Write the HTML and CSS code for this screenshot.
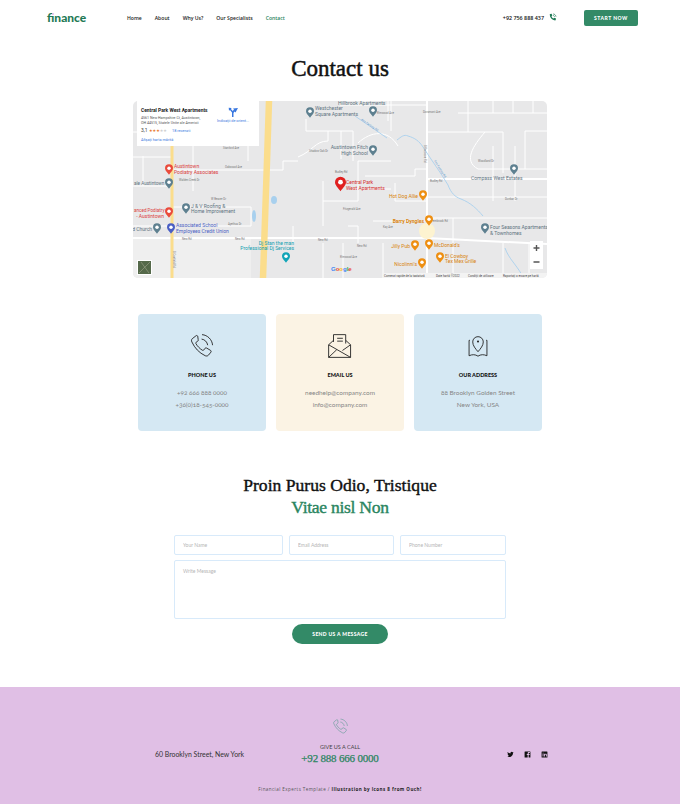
FILE: index.html
```html
<!DOCTYPE html>
<html lang="en">
<head>
    <meta charset="UTF-8">
    <meta name="viewport" content="width=device-width, initial-scale=1.0">
    <title>Contact us</title>
    <link rel="stylesheet" href="styles.css">
</head>
<body>
    <header class="site_header">
        <a class="logo" href="#home">finance</a>
        <nav class="main_nav">
            <a href="#home">Home</a>
            <a href="#about">About</a>
            <a href="#why">Why Us?</a>
            <a href="#specialists">Our Specialists</a>
            <a class="active" href="#contact">Contact</a>
        </nav>
        <div class="header_phone">
            <span>+92 756 888 437</span>
            <svg class="phone_small" viewBox="0 0 24 24">
                <path class="phone_fill" d="M6 2.5l3.6-.8 2 5-2.3 1.8c.8 2.8 2.7 5 5.3 6.3l2-2.2 4.8 2.3-.9 3.900c-.2.8-.9 1.300-1.700 1.200C10.500 18.500 4.800 12.300 4.600 4.200c0-.8.6-1.500 1.400-1.700z"/>
                <path class="phone_wave" d="M14 2.500c3.800.5 6.800 3.500 7.300 7.300M14 6.500c1.700.4 3 1.700 3.400 3.400"/>
            </svg>
        </div>
        <a class="btn_start" href="#start">START NOW</a>
    </header>

    <main>
        <h1 class="page_title">Contact us</h1>

        <section class="map_box">
            <svg class="map" viewBox="0 0 414 177">
                <defs>
                    <symbol id="pin" viewBox="0 0 12 16">
                        <path d="M6 0a6 6 0 0 1 6 6c0 3.500-3.500 6-6 10C3.500 12 0 9.500 0 6a6 6 0 0 1 6-6z"/>
                        <circle cx="6" cy="6" r="2.600" fill="#fff"/>
                    </symbol>
                </defs>
                <rect width="414" height="177" fill="#e8e8e9"/>
                <rect y="137" width="118" height="40" fill="#efefef"/>

                <!-- minor streets -->
                <g class="street">
                    <path d="M0 85H40M40 69H150M0 56H40M0 31H38M60 36V90M84 10V36H100M115 30V60M40 106H118V125H60M0 125H40"/>
                    <path d="M150 69V60H165M165 56C180 50 182 40 195 40V30M190 80V125M190 100H225V60M225 60H258M220 88H258M208 58V30M258 30V0"/>
                    <path d="M207 4H294M232 0V4M255 0V20M225 42C238 30 255 28 265 45M173 18V30H220V60"/>
                    <path d="M294 31H370V72M335 0V31M325 12H414M360 12V0M380 12V0M400 12V0M352 31C340 45 330 60 345 68H414M360 45V100M382 45V100M414 30H392V68M294 96H414M294 117H414M240 120H294M320 117V142M320 142V177M370 142V177M396 142V177"/>
                    <path d="M294 68H282V75H232M160 125V142M215 125H225V142M10 55V85M190 142V177M210 142V177M250 142V177"/>
                    <path d="M262 100H294M262 100V82"/>
                </g>
                <g class="street_main">
                    <path d="M0 137H294L414 143"/>
                    <path d="M294 0V177"/>
                    <path d="M294 78H414"/>
                </g>

                <!-- water -->
                <g class="stream">
                    <path d="M264 39C268 36 271 33 275 35C282 37 286 40 290 46C299 60 308 72 315 84C318 92 322 96 328 98C338 102 344 108 350 115"/>
                    <path d="M372 147C376 158 382 162 389 174"/>
                    <path d="M222 15L254 37"/>
                </g>
                <g class="pond">
                    <ellipse cx="141" cy="99" rx="3" ry="4"/>
                    <ellipse cx="121" cy="115" rx="2" ry="6"/>
                </g>

                <!-- highways -->
                <path class="highway" d="M136 0L134 60L130 177"/>
                <path class="highway_thin" d="M39 0V177"/>

                <ellipse cx="294" cy="130" rx="8" ry="8" fill="#fdf3d0"/>

                <g class="road_label">
                    <text x="176" y="51">Shadow Oak Dr</text>
                    <text x="90" y="48">Stanford Ave</text>
                    <text x="92" y="67">Oakwood Ave</text>
                    <text x="46" y="80">Walden Creek Dr</text>
                    <text x="78" y="99">W Beaver Dr</text>
                    <text x="95" y="124">Ayethus Dr</text>
                    <text x="49" y="139">New Rd</text>
                    <text x="102" y="139">New Rd</text>
                    <text x="185" y="140">New Rd</text>
                    <text x="224" y="146">New Rd</text>
                    <text x="202" y="72">Budley Rd</text>
                    <text x="297" y="81">Budley Rd</text>
                    <text x="372" y="99">Dunbar Dr</text>
                    <text x="210" y="109">Fitzgerald Ave</text>
                    <text x="250" y="127">Kay Ave</text>
                    <text x="298" y="121">Pembrook Rd</text>
                    <text x="207" y="157">Elmwood Ave</text>
                    <text x="290" y="12">Dorsmont Ave</text>
                    <text x="244" y="13">Elmwood Ave</text>
                    <text x="345" y="61">Woodland Dr</text>
                </g>
                <text class="road_river" transform="translate(228 19) rotate(35)">Ave Factory Rd</text>
                <text class="road_river" transform="translate(301 60) rotate(58)">Ave Factory Rd</text>
                <text class="road_label" transform="translate(291 44) rotate(90)">S Raccoon Rd</text>
                <text class="road_label" transform="translate(40 150) rotate(90)">S Canfield Rd</text>

                <!-- place pins -->
                <g class="pin_grey">
                    <use href="#pin" x="173" y="6" width="8" height="11"/>
                    <use href="#pin" x="236" y="5" width="8" height="11"/>
                    <use href="#pin" x="236" y="44" width="8" height="11"/>
                    <use href="#pin" x="377" y="63" width="8" height="11"/>
                    <use href="#pin" x="32" y="77" width="8" height="11"/>
                    <use href="#pin" x="49" y="102" width="8" height="11"/>
                    <use href="#pin" x="20" y="122" width="8" height="11"/>
                    <use href="#pin" x="348" y="122" width="8" height="11"/>
                </g>
                <use class="pin_blue" href="#pin" x="34" y="122" width="8" height="11"/>
                <use class="pin_teal" href="#pin" x="149" y="151" width="8" height="11"/>
                <g class="pin_red">
                    <use href="#pin" x="32" y="63" width="8" height="11"/>
                    <use href="#pin" x="32" y="106" width="8" height="11"/>
                </g>
                <use class="pin_main" href="#pin" x="202" y="75" width="11" height="16"/>
                <g class="pin_orange">
                    <use href="#pin" x="286" y="89" width="8" height="11"/>
                    <use href="#pin" x="292" y="114" width="8" height="11"/>
                    <use href="#pin" x="278" y="139" width="8" height="11"/>
                    <use href="#pin" x="292" y="138" width="8" height="11"/>
                    <use href="#pin" x="303" y="151" width="8" height="11"/>
                    <use href="#pin" x="285" y="157" width="8" height="11"/>
                </g>

                <g class="label_grey">
                    <text x="182" y="9">Westchester</text>
                    <text x="182" y="15">Square Apartments</text>
                    <text x="205" y="4">Hillbrook Apartments</text>
                    <text class="to_left" x="235" y="48">Austintown Fitch</text>
                    <text class="to_left" x="235" y="54">High School</text>
                    <text x="338" y="79">Compass West Estates</text>
                    <text x="58" y="107">J &amp; V Roofing &amp;</text>
                    <text x="58" y="112">Home Improvement</text>
                    <text x="357" y="128">Four Seasons Apartments</text>
                    <text x="357" y="134">&amp; Townhomes</text>
                    <text class="label_cut" x="1" y="84">ale Austintown</text>
                    <text class="to_left" x="19" y="130">d Church</text>
                </g>
                <g class="label_red">
                    <text x="41" y="67">Austintown</text>
                    <text x="41" y="73">Podiatry Associates</text>
                    <text class="label_cut" x="1" y="111">anced Podiatry</text>
                    <text class="to_left" x="31" y="117">- Austintown</text>
                </g>
                <g class="label_main">
                    <text x="213" y="83">Central Park</text>
                    <text x="213" y="89">West Apartments</text>
                </g>
                <g class="label_blue">
                    <text x="43" y="126">Associated School</text>
                    <text x="43" y="132">Employees Credit Union</text>
                </g>
                <g class="label_teal">
                    <text class="to_left" x="161" y="144">Dj Stan the man</text>
                    <text class="to_left" x="161" y="149">Professional Dj Services</text>
                </g>
                <g class="label_orange">
                    <text class="to_left" x="285" y="97">Hot Dog Allie</text>
                    <text class="label_bold to_left" x="291" y="122">Barry Dyngles</text>
                    <text class="to_left" x="277" y="147">Jilly Pub</text>
                    <text x="301" y="146">McDonald's</text>
                    <text x="312" y="157">El Cowboy</text>
                    <text x="312" y="162">Tex Mex Grille</text>
                    <text class="to_left" x="284" y="165">Nicolinni's</text>
                </g>

                <!-- info card -->
                <rect class="info_card" x="4" y="0" width="122" height="45"/>
                <text class="info_title" x="8" y="11">Central Park West Apartments</text>
                <text class="info_text" x="8" y="18">4561 New Hampshire Ct, Austintown,</text>
                <text class="info_text" x="8" y="23">OH 44515, Statele Unite ale Americii</text>
                <text class="info_rate" x="8" y="31">3,1</text>
                <text class="info_star" x="16" y="31">★★★<tspan class="info_star_off">★★</tspan></text>
                <text class="info_link" x="39" y="31">18 recenzii</text>
                <text class="info_link" x="8" y="40">Afișați harta mărită</text>
                <path class="info_dir" d="M105 7l-2.500 4.500-1-1-1 1.500v4h-1.500v-4.500l-2-2.500-1 .8-.3-3 3 .2-.8.900 1.800 2 1.300-1.500-1-1z"/>
                <text class="info_link" x="84" y="21">Indicații de orient...</text>

                <!-- map controls -->
                <rect class="sat_box" x="4" y="159" width="15" height="15"/>
                <rect class="sat_img" x="5" y="160" width="13" height="13"/>
                <path class="sat_road" d="M6 172L17 161M8 161L16 172"/>
                <rect class="zoom_box" x="397" y="140" width="13" height="28"/>
                <path class="zoom_sign" d="M403.500 144v6M400.500 147h6M400.500 161h6"/>
                <text class="google_logo" x="198" y="170"><tspan fill="#4285f4">G</tspan><tspan fill="#ea4335">o</tspan><tspan fill="#fbbc05">o</tspan><tspan fill="#4285f4">g</tspan><tspan fill="#34a853">l</tspan><tspan fill="#ea4335">e</tspan></text>
                <rect class="attr_bar" x="250" y="172" width="164" height="5"/>
                <text class="attr_text" x="251" y="176">Comenzi rapide de la tastatură</text>
                <text class="attr_text" x="303" y="176">Date hartă ©2022</text>
                <text class="attr_text" x="335" y="176">Condiții de utilizare</text>
                <text class="attr_text" x="370" y="176">Raportați o eroare pe hartă</text>
            </svg>
        </section>

        <section class="contact_cards">
            <div class="card card_blue">
                <svg class="card_icon" viewBox="0 0 32 32">
                    <path d="M8.500 3.500L4 7c-1 1-1.200 2.500-.5 4 3.500 7.500 9 13.500 16.500 17 1.500.6 3 .4 4-.8l3-3.700c.5-.7.4-1.500-.3-2l-5-3c-.7-.4-1.400-.3-1.900.3l-1.800 2.300c-.4.4-.9.5-1.400.2-3-1.700-6.500-5.200-8.200-8.500-.2-.5-.1-1 .3-1.300l2.200-1.600c.6-.5.8-1.200.4-1.900L10.700 3.800c-.5-.8-1.500-1-2.200-.3z"/>
                    <path d="M15.500 7.500c3.800.4 7 3.600 7.500 7.500M16 2c6.700.5 12.500 6 13 13"/>
                </svg>
                <h3>PHONE US</h3>
                <p>+92 666 888 0000</p>
                <p>+36(0)18-545-0000</p>
            </div>
            <div class="card card_cream">
                <svg class="card_icon" viewBox="0 0 32 32">
                    <path d="M8 11V2h15v11M12.500 6.500h7M12.500 10h7"/>
                    <path d="M8 9L2 14.500V30h27V14.500L23 9M2 14.500L29 30M2 30l10-9.500M29 14.500L19 21.500"/>
                </svg>
                <h3>EMAIL US</h3>
                <p>needhelp@company.com</p>
                <p>info@company.com</p>
            </div>
            <div class="card card_blue">
                <svg class="card_icon" viewBox="0 0 32 32">
                    <path d="M16 23c-3-3.500-6.500-7.500-6.500-12a6.500 6.500 0 0 1 13 0c0 4.500-3.500 8.500-6.500 12z"/>
                    <circle class="icon_dot" cx="16" cy="10.500" r="1.300"/>
                    <path d="M6 9H5v19c4-1.800 7.500-1.800 11 .5 3.500-2.300 7-2.300 11-.5V9h-1"/>
                </svg>
                <h3>OUR ADDRESS</h3>
                <p>88 Brooklyn Golden Street</p>
                <p>New York, USA</p>
            </div>
        </section>

        <section class="form_section">
            <h2>Proin Purus Odio, Tristique <span>Vitae nisl Non</span></h2>
            <form class="contact_form">
                <div class="form_row">
                    <input type="text" placeholder="Your Name">
                    <input type="text" placeholder="Email Address">
                    <input type="text" placeholder="Phone Number">
                </div>
                <textarea placeholder="Write Message"></textarea>
                <button type="button">SEND US A MESSAGE</button>
            </form>
        </section>
    </main>

    <footer class="site_footer">
        <div class="footer_top">
            <p class="footer_address">60 Brooklyn Street, New York</p>
            <div class="footer_call">
                <svg class="footer_icon" viewBox="0 0 32 32">
                    <path d="M8.500 3.500L4 7c-1 1-1.200 2.500-.5 4 3.500 7.500 9 13.500 16.500 17 1.500.6 3 .4 4-.8l3-3.700c.5-.7.4-1.500-.3-2l-5-3c-.7-.4-1.400-.3-1.900.3l-1.800 2.300c-.4.4-.9.5-1.400.2-3-1.700-6.500-5.200-8.200-8.500-.2-.5-.1-1 .3-1.300l2.200-1.600c.6-.5.8-1.200.4-1.900L10.700 3.800c-.5-.8-1.500-1-2.200-.3z"/>
                    <path d="M15.500 7.500c3.800.4 7 3.600 7.500 7.500M16 2c6.700.5 12.500 6 13 13"/>
                </svg>
                <span class="call_label">GIVE US A CALL</span>
                <span class="call_number">+92 888 666 0000</span>
            </div>
            <div class="footer_social">
                <svg viewBox="0 0 24 24"><path d="M23 4.900c-.8.4-1.700.6-2.600.7.900-.6 1.600-1.400 2-2.500-.9.5-1.800.9-2.900 1.100A4.500 4.500 0 0 0 11.800 8.300 12.800 12.800 0 0 1 2.500 3.600a4.500 4.500 0 0 0 1.400 6c-.7 0-1.400-.2-2-.6 0 2.200 1.500 4.100 3.600 4.500-.7.2-1.400.2-2 .1.6 1.800 2.300 3.100 4.200 3.100A9 9 0 0 1 1 18.600 12.800 12.800 0 0 0 20.700 7.200c.9-.6 1.700-1.400 2.300-2.300z"/></svg>
                <svg viewBox="0 0 24 24"><path d="M3 2h18a1 1 0 0 1 1 1v18a1 1 0 0 1-1 1h-5v-8h3l.5-3.500H16V8.500c0-1 .4-1.700 1.800-1.700H20V3.700c-.5 0-1.600-.2-2.900-.2-2.800 0-4.600 1.700-4.600 4.700v2.300h-3V14h3v8H3a1 1 0 0 1-1-1V3a1 1 0 0 1 1-1z"/></svg>
                <svg viewBox="0 0 24 24"><path fill-rule="evenodd" d="M3 2h18a1 1 0 0 1 1 1v18a1 1 0 0 1-1 1H3a1 1 0 0 1-1-1V3a1 1 0 0 1 1-1zm2.500 7.500V19h3V9.500h-3zM7 5a1.700 1.700 0 1 0 0 3.400A1.700 1.700 0 0 0 7 5zm3.500 4.500V19h3v-5c0-1.500.6-2.300 1.800-2.300s1.700.8 1.700 2.300v5h3v-5.800c0-2.700-1.400-4-3.500-4-1.400 0-2.400.6-3 1.600V9.500h-3z"/></svg>
            </div>
        </div>
        <p class="footer_credit">Financial Experts Template / <strong>Illustration by Icons 8 from Ouch!</strong></p>
    </footer>
</body>
</html>
```

FILE: styles.css
```css
* {
    box-sizing: border-box;
}

body {
    font-family: "Open Sans", Arial, sans-serif;
    margin: 0;
    padding: 0;
    background-color: #fff;
    color: #111;
}

h1, h2, h3, p {
    margin: 0;
}

a {
    text-decoration: none;
    color: inherit;
}

/* header */
.site_header {
    display: flex;
    align-items: center;
    height: 35px;
    padding: 0 42px 0 47px;
}

.logo {
    position: relative;
    width: 80px;
    font-family: Lato, sans-serif;
    font-size: 12px;
    font-weight: 900;
    color: #1f7a56;
}

/* pink dot on the i */
.logo::after {
    content: "";
    position: absolute;
    left: 5px;
    top: 3px;
    width: 2px;
    height: 2px;
    border-radius: 50%;
    background-color: #e6b8e8;
}

.main_nav {
    display: flex;
    gap: 13px;
    font-size: 5.1px;
    font-weight: 600;
    color: #222;
}

.main_nav .active {
    color: #2a8560;
}

.header_phone {
    display: flex;
    align-items: center;
    gap: 4px;
    margin-left: auto;
    margin-right: 27px;
    font-size: 5.4px;
    font-weight: 600;
}

.phone_small {
    width: 9px;
    height: 9px;
}

.phone_fill {
    fill: #1f7a56;
}

.phone_wave {
    fill: none;
    stroke: #1f7a56;
    stroke-width: 2;
}

.btn_start {
    display: flex;
    align-items: center;
    justify-content: center;
    width: 54px;
    height: 16px;
    border-radius: 2px;
    background-color: #338a67;
    color: #fff;
    font-family: Lato, sans-serif;
    font-size: 5px;
    font-weight: 900;
    letter-spacing: .5px;
}

/* title */
.page_title {
    margin-top: 19px;
    margin-bottom: 17px;
    font-family: "Liberation Serif", serif;
    font-size: 23px;
    line-height: 30px;
    font-weight: 400;
    -webkit-text-stroke: .5px #111;
    text-align: center;
    color: #111;
}

/* map */
.map_box {
    width: 414px;
    height: 177px;
    margin: 0 auto;
    border-radius: 5px;
    overflow: hidden;
}

.map {
    display: block;
    width: 100%;
    height: 100%;
    font-family: Roboto, sans-serif;
}

.to_left {
    text-anchor: end;
}

.street, .street_main, .stream {
    fill: none;
}

.street {
    stroke: #fff;
    stroke-width: 1;
}

.street_main {
    stroke: #fff;
    stroke-width: 2;
}

.stream {
    stroke: #a8d0ee;
    stroke-width: .9;
}

.pond {
    fill: #a8d0ee;
}

.highway {
    fill: none;
    stroke: #fbdd8c;
    stroke-width: 6.5;
}

.highway_thin {
    fill: none;
    stroke: #fbdd8c;
    stroke-width: 3;
}

.road_label {
    font-size: 2.8px;
    fill: #777;
}

.road_river {
    font-size: 3px;
    fill: #5c97cc;
}

.pin_grey {
    fill: #5e8090;
}

.pin_blue {
    fill: #4a5fc4;
}

.pin_teal {
    fill: #12a5b8;
}

.pin_red {
    fill: #ea4b3c;
}

.pin_main {
    fill: #e02020;
}

.pin_orange {
    fill: #ee8f12;
}

.label_grey {
    font-size: 5px;
    fill: #5e7380;
}

.label_red {
    font-size: 5px;
    fill: #dc3d3d;
}

.label_main {
    font-size: 5px;
    fill: #d42a2a;
}

.label_blue {
    font-size: 5px;
    fill: #4a5fc4;
}

.label_teal {
    font-size: 5px;
    fill: #129eb0;
}

.label_orange {
    font-size: 5px;
    fill: #d8820c;
}

.label_bold {
    font-weight: 700;
}

.label_cut {
    font-size: 4.6px;
}

.info_card {
    fill: #fff;
}

.info_title {
    font-size: 4.9px;
    font-weight: 700;
    fill: #222;
}

.info_text {
    font-size: 3.6px;
    fill: #555;
}

.info_rate {
    font-size: 5px;
    fill: #444;
}

.info_star {
    font-family: "DejaVu Sans", sans-serif;
    font-size: 4px;
    fill: #e7711b;
}

.info_star_off {
    fill: #ccc;
}

.info_link {
    font-size: 3.8px;
    fill: #3a78e0;
}

.info_dir {
    fill: #3a78e0;
}

.sat_box, .zoom_box {
    fill: #fff;
}

.sat_img {
    fill: #55694a;
}

.sat_road {
    fill: none;
    stroke: #a0a58c;
    stroke-width: .6;
}

.zoom_sign {
    fill: none;
    stroke: #555;
    stroke-width: 1.4;
}

.google_logo {
    font-family: "Liberation Sans", sans-serif;
    font-size: 6px;
    font-weight: 700;
}

.attr_bar {
    fill: #f3f3f3;
}

.attr_text {
    font-size: 3px;
    fill: #444;
}

/* cards */
.contact_cards {
    display: flex;
    gap: 10px;
    width: 404px;
    margin: 36px auto 0;
}

.card {
    flex: 1;
    height: 117px;
    padding-top: 19px;
    border-radius: 4px;
    text-align: center;
}

.card_blue {
    background-color: #d5e8f3;
}

.card_cream {
    background-color: #fbf3e4;
}

.card_icon {
    display: block;
    width: 26px;
    height: 26px;
    margin: 0 auto 12px;
    fill: none;
    stroke: #222;
    stroke-width: 1.1;
}

.icon_dot {
    fill: #222;
    stroke: none;
}

.card h3 {
    margin-bottom: 8px;
    font-family: Lato, sans-serif;
    font-size: 5.5px;
    line-height: 8px;
    font-weight: 900;
    color: #111;
}

.card p {
    font-family: Lato, sans-serif;
    font-size: 6.4px;
    line-height: 12px;
    font-feature-settings: "onum";
    color: #858585;
}

/* form */
.form_section {
    margin-top: 43px;
    text-align: center;
}

.form_section h2 {
    margin: 0 auto;
    font-family: "Liberation Serif", serif;
    font-size: 17.6px;
    line-height: 22px;
    font-weight: 400;
    -webkit-text-stroke: .4px #111;
    color: #111;
}

.form_section h2 span {
    display: block;
    letter-spacing: -.3px;
    -webkit-text-stroke: .4px #2a8560;
    color: #2a8560;
}

.contact_form {
    display: flex;
    flex-direction: column;
    gap: 5px;
    width: 332px;
    margin: 17px auto 0;
}

.form_row {
    display: grid;
    grid-template-columns: 109px 105px 106px;
    gap: 6px;
}

.contact_form input, .contact_form textarea {
    display: block;
    border: 1px solid #d8eafa;
    border-radius: 2px;
    outline: none;
    padding: 0 8px;
    background-color: #fff;
    font-family: Lato, sans-serif;
    font-size: 5px;
}

.contact_form input {
    min-width: 0;
    height: 20px;
}

.contact_form textarea {
    width: 100%;
    height: 59px;
    padding-top: 7px;
    resize: none;
}

.contact_form ::placeholder {
    color: #b5b5b5;
}

.contact_form button {
    align-self: center;
    width: 96px;
    height: 20px;
    border: 0;
    border-radius: 10px;
    background-color: #338a67;
    color: #fff;
    font-family: Lato, sans-serif;
    font-size: 5px;
    font-weight: 900;
    letter-spacing: .35px;
}

/* footer */
.site_footer {
    height: 117px;
    margin-top: 43px;
    padding-top: 31px;
    background-color: #e0bfe5;
}

.footer_top {
    display: grid;
    grid-template-columns: 146px 78px 1fr;
    width: 393px;
    margin: 0 0 0 155px;
}

.footer_address {
    margin-top: 30px;
    font-family: Lato, sans-serif;
    font-size: 6.9px;
    line-height: 12px;
    color: #333;
}

.footer_call {
    display: flex;
    flex-direction: column;
    align-items: center;
}

.footer_icon {
    width: 17px;
    height: 17px;
    fill: none;
    stroke: #5c9a92;
    stroke-width: 1.1;
}

.call_label {
    margin-top: 8px;
    font-family: Lato, sans-serif;
    font-size: 5.5px;
    line-height: 8px;
    color: #444;
}

.call_number {
    font-family: "Liberation Serif", serif;
    font-size: 11px;
    line-height: 15px;
    letter-spacing: -.2px;
    white-space: nowrap;
    -webkit-text-stroke: .25px #2a8560;
    color: #2a8560;
}

.footer_social {
    display: flex;
    justify-content: flex-end;
    gap: 10px;
    margin-top: 33px;
}

.footer_social svg {
    width: 7px;
    height: 7px;
    fill: #111;
}

.footer_credit {
    margin-top: 20px;
    font-size: 4.5px;
    line-height: 7px;
    letter-spacing: .45px;
    text-align: center;
    color: #555;
}

.footer_credit strong {
    color: #222;
}
```
